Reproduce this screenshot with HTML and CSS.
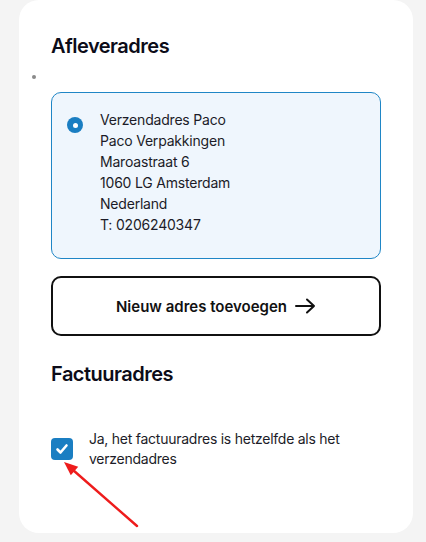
FILE: index.html
```html
<!DOCTYPE html>
<html lang="nl">
<head>
<meta charset="utf-8">
<title>Adres</title>
<link rel="stylesheet" href="styles.css">
</head>
<body>
<div class="card">
  <h2 class="title">Afleveradres</h2>
  <div class="marker"></div>
  <div class="address">
    <span class="radio"></span>
    <div class="lines">
      <div>Verzendadres Paco</div>
      <div>Paco Verpakkingen</div>
      <div>Maroastraat 6</div>
      <div>1060 LG Amsterdam</div>
      <div>Nederland</div>
      <div>T: 0206240347</div>
    </div>
  </div>
  <button class="add">Nieuw adres toevoegen
    <svg class="arrow" width="21" height="16" viewBox="0 0 21 16"><path d="M1 8H19M12 1.5L19 8L12 14.5" fill="none" stroke="#111" stroke-width="2" stroke-linecap="round" stroke-linejoin="round"/></svg>
  </button>
  <h2 class="title title2">Factuuradres</h2>
  <label class="same">
    <span class="check"><svg width="22" height="22" viewBox="0 0 22 22"><path d="M6.5 11.5L9.5 14.5L15.5 7.5" fill="none" stroke="#fff" stroke-width="2.6" stroke-linecap="round" stroke-linejoin="round"/></svg></span>
    <span class="same-text">Ja, het factuuradres is hetzelfde als het verzendadres</span>
  </label>
</div>
<svg class="pointer" width="426" height="542" viewBox="0 0 426 542"><line x1="137" y1="526" x2="73" y2="470" stroke="#ee1c1c" stroke-width="2.4" stroke-linecap="round"/><polygon points="64,462 70.8,475.2 78.2,466.8" fill="#ee1c1c"/></svg>
</body>
</html>
```
FILE: styles.css
```css
* { box-sizing: border-box; }
html, body { margin: 0; padding: 0; }
body {
  background: #f4f4f4;
  font-family: Inter, "Noto Sans", sans-serif;
  color: #1c1c28;
  width: 426px;
  height: 542px;
  overflow: hidden;
  position: relative;
}
.card {
  margin-left: 19px;
  width: 394px;
  background: #fff;
  border-radius: 20px;
  padding: 32px 32px 64px 32px;
}
.title {
  margin: 0;
  font-size: 20px;
  line-height: 28px;
  font-weight: 600;
  color: #0c0c18;
  letter-spacing: -0.5px;
}
.marker {
  width: 4px;
  height: 4px;
  border-radius: 50%;
  background: #8a8a8a;
  margin: 15px 0 0 -19px;
}
.address {
  margin-top: 13px;
  border: 1px solid #1f86c6;
  border-radius: 10px;
  background: #eff6fd;
  padding: 16px 15px 23px 15px;
  display: flex;
  gap: 17px;
}
.radio {
  flex: none;
  width: 16px;
  height: 16px;
  margin-top: 8px;
  border-radius: 50%;
  background: #1a7ec2;
  display: flex;
  align-items: center;
  justify-content: center;
}
.radio::after {
  content: "";
  width: 5px;
  height: 5px;
  border-radius: 50%;
  background: #fff;
}
.lines {
  font-size: 14px;
  line-height: 21px;
  color: #1c1c28;
  letter-spacing: -0.2px;
}
.add {
  margin-top: 17px;
  width: 100%;
  height: 60px;
  border: 2px solid #111;
  border-radius: 10px;
  background: #fff;
  font-family: inherit;
  font-size: 15px;
  font-weight: 600;
  color: #111;
  display: flex;
  align-items: center;
  justify-content: center;
  gap: 8px;
  padding: 0;
}
.arrow { display: block; }
.title2 { margin-top: 24px; }
.same {
  margin-top: 41px;
  display: flex;
  align-items: center;
  gap: 16px;
}
.check {
  flex: none;
  width: 22px;
  height: 22px;
  border-radius: 4px;
  background: #1a7ec2;
  display: block;
}
.check svg { display: block; }
.same-text {
  font-size: 14px;
  line-height: 20px;
  color: #1c1c28;
  letter-spacing: -0.25px;
}
.pointer {
  position: absolute;
  left: 0;
  top: 0;
  pointer-events: none;
}
```
